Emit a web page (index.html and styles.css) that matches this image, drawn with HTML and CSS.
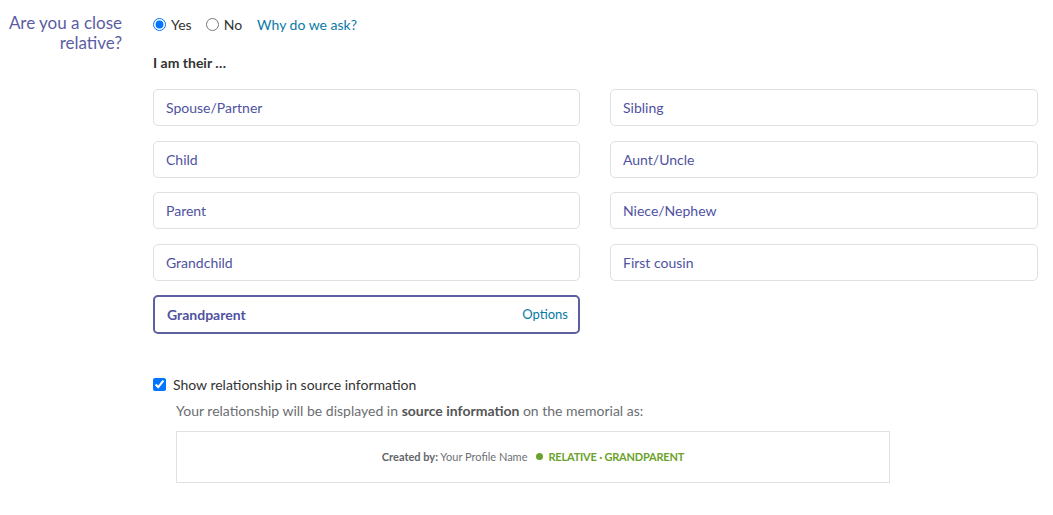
FILE: index.html
```html
<!DOCTYPE html>
<html lang="en">
<head>
    <meta charset="UTF-8">
    <meta name="viewport" content="width=device-width, initial-scale=1.0">
    <title>Close relative</title>
    <link rel="stylesheet" href="styles.css">
</head>
<body>
    <div class="field-row">
        <div class="field-label">Are you a close relative?</div>
        <div class="field-body">
            <div class="radio-line">
                <label class="radio"><input type="radio" name="rel" checked> Yes</label>
                <label class="radio"><input type="radio" name="rel"> No</label>
                <a href="#" class="why">Why do we ask?</a>
            </div>
            <div class="am-their">I am their …</div>
            <div class="rel-grid">
                <div class="rel-option">Spouse/Partner</div>
                <div class="rel-option">Sibling</div>
                <div class="rel-option">Child</div>
                <div class="rel-option">Aunt/Uncle</div>
                <div class="rel-option">Parent</div>
                <div class="rel-option">Niece/Nephew</div>
                <div class="rel-option">Grandchild</div>
                <div class="rel-option">First cousin</div>
                <div class="rel-option selected"><span>Grandparent</span><a href="#" class="options">Options</a></div>
            </div>

            <label class="show-check"><input type="checkbox" checked> Show relationship in source information</label>
            <div class="show-help">
                <p>Your relationship will be displayed in <b>source information</b> on the memorial as:</p>
                <div class="preview">
                    <span class="created"><b>Created by:</b> Your Profile Name</span>
                    <span class="badge"><i class="dot"></i>RELATIVE · GRANDPARENT</span>
                </div>
            </div>
        </div>
    </div>
</body>
</html>
```

FILE: styles.css
```css
body { font-family: Lato, "Open Sans", sans-serif; background: #fff; color: #333; margin: 0; }

.field-row { display: flex; gap: 31px; padding-top: 13px; }
.field-label { width: 122px; text-align: right; font-size: 17px; line-height: 20px; color: #5b5da4; }
.field-body { width: 885px; }

.radio-line { display: flex; align-items: center; height: 22px; font-size: 14px; }
.radio { display: flex; align-items: center; gap: 5px; margin-right: 14px; color: #333; }
.radio input { margin: 0; width: 13px; height: 13px; }
.why { color: #0a7aa6; text-decoration: none; margin-left: 1px; }

.am-their { font-weight: bold; font-size: 14px; margin: 19px 0 18px; }

.rel-grid { display: grid; grid-template-columns: 427px 428px; column-gap: 30px; row-gap: 14.5px; }
.rel-option {
    height: 37px;
    box-sizing: border-box;
    border: 1px solid #e0e0e4;
    border-radius: 5px;
    padding: 0 12px;
    display: flex;
    align-items: center;
    justify-content: space-between;
    font-size: 14px;
    color: #4f52a0;
}
.rel-option.selected { height: 39px; margin-top: -0.5px; border: 2px solid #5d5f9f; padding: 0 10px 0 12px; font-weight: bold; }
.options { color: #0a7aa6; text-decoration: none; font-weight: normal; font-size: 13px; }

.show-check { display: flex; align-items: center; gap: 7px; margin-top: 42px; font-size: 14px; color: #333; }
.show-check input { margin: 0; width: 13px; height: 13px; }
.show-help { padding-left: 23px; }
.show-help p { margin: 9px 0 12px; font-size: 14px; color: #6b6e72; }
.show-help p b { color: #555; }

.preview {
    width: 714px;
    height: 52px;
    box-sizing: border-box;
    border: 1px solid #e2e2e2;
    display: flex;
    align-items: center;
    justify-content: center;
    gap: 9px;
    font-size: 11px;
}
.created { color: #6d7075; }
.created b { color: #62656a; }
.badge { color: #6aa22a; font-weight: bold; display: flex; align-items: center; gap: 5px; letter-spacing: -0.2px; }
.dot { width: 7px; height: 7px; border-radius: 50%; background: #6aa22a; display: inline-block; }
```
